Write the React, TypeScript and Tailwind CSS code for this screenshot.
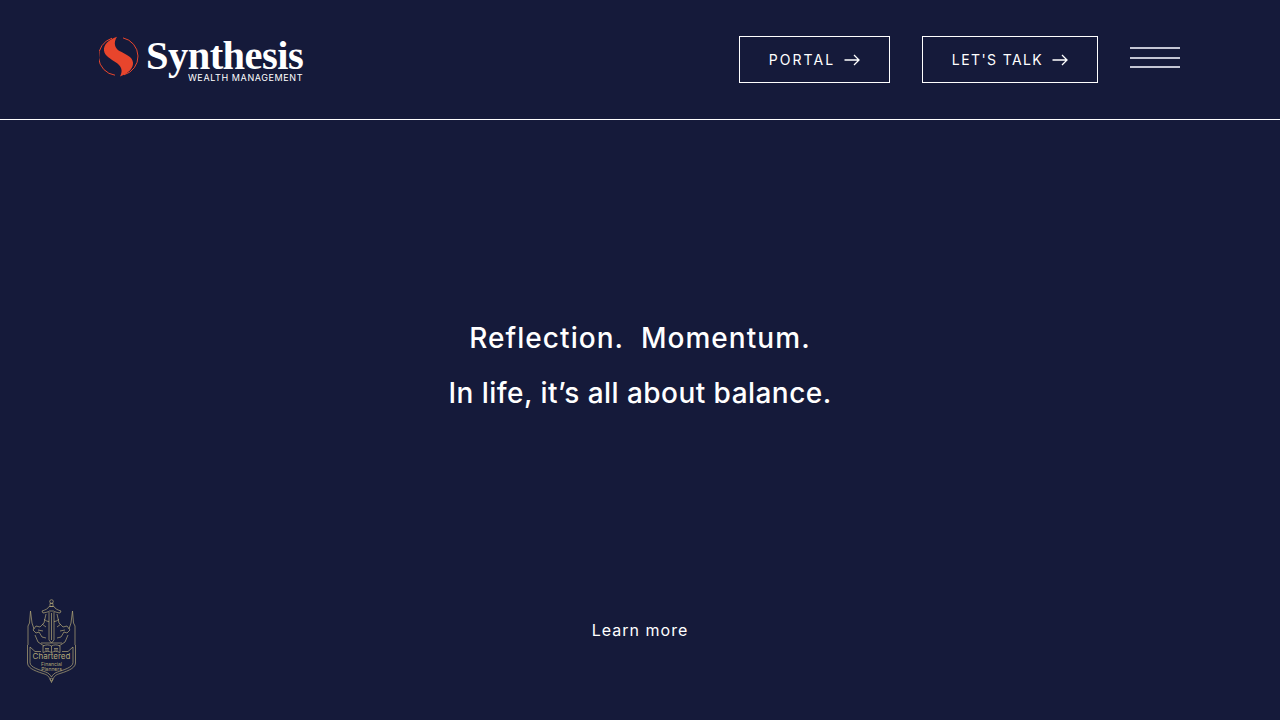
import React from "react";

function Arrow() {
  return (
    <svg width="16" height="12" viewBox="0 0 16 12" fill="none" stroke="#ffffff" strokeWidth="1.3" className="shrink-0">
      <path d="M0.5 6H15M10 1l5 5-5 5" />
    </svg>
  );
}

function LogoMark() {
  return (
    <svg width="40" height="41" viewBox="0 0 40 41" fill="none" className="shrink-0">
      <path d="M13 2.200A19 19 0 0 0 16 39.200" stroke="#e8452c" strokeWidth="1" />
      <path d="M25 38.800A19 19 0 0 0 24 1.900" stroke="#e8452c" strokeWidth="1" />
      <path
        d="M18 0.800C9 4 4.500 9 5 14.500C5.500 20 12 23 17 26.500C22 30 24.500 34 21 40.500C29 37.500 34.500 32.500 34 26.500C33.500 20.500 26 18 20.500 15C16 12.500 14 7 18 0.800Z"
        fill="#e8452c"
      />
    </svg>
  );
}

function Crest() {
  return (
    <div className="absolute left-[26px] top-[599px] w-[51px] h-[85px]">
      <svg width="51" height="85" viewBox="0 0 51 85" fill="none" stroke="#b3a878" strokeWidth="0.7" className="absolute inset-0">
        <circle cx="25.500" cy="2.500" r="1.800" />
        <path d="M24 4.500h3v3h-3zM16 12c3-1 6-2 7-4.500h5c1 2.500 4 3.500 7 4.500l-1 2c-3-.5-5-1-6.500-2h-4C22 13 20 13.500 17 14z" />
        <path d="M23 13v28l2.500 3 2.500-3V13M25.500 14v27" />
        <path d="M18 20c1.500 2 4 2.500 5 2.500M33 20c-1.500 2-4 2.500-5 2.500" />
        <path d="M2 46V27l1.500-3 1-12 1.500 12 2 6M49 46V27l-1.500-3-1-12-1.500 12-2 6" />
        <path d="M1.500 46v18c0 6 11 9 17 11 3.500 1.200 5 3 7 8.500 2-5.500 3.500-7.300 7-8.500 6-2 17-5 17-11V46" />
        <path d="M4 48v15.500c0 5 10 7.500 15.500 9.500 3 1 4.500 2.500 6 5 1.500-2.500 3-4 6-5 5.500-2 15.500-4.500 15.500-9.500V48" />
        <path d="M20 15l-2 9-4 4-4-1-3 4 3 3 3-1 3 5 4 1M31 15l2 9 4 4 4-1 3 4-3 3-3-1-3 5-4 1" />
        <path d="M9 36l3 7 6 4M42 36l-3 7-6 4" />
        <path d="M16 25l4 3M35 25l-4 3M12 31l5 1M39 31l-5 1" />
        <path d="M15 44h21M17 47c3-1.500 6-1.500 8.500 0 2.500-1.500 5.500-1.500 8.500 0v6.500c-3-1.500-6-1.500-8.500 0-2.500-1.500-5.500-1.500-8.500 0zM25.500 47v6.500M19 49.500h4M19 51h4M28 49.500h4M28 51h4" />
        <path d="M4 48l5 4.500h6M47 48l-5 4.500h-6" />
        <circle cx="25.500" cy="80.500" r="1.300" />
      </svg>
      <div className="absolute inset-x-0 top-[53px] flex flex-col items-center text-[#b3a878] font-['Inter',sans-serif] leading-none">
        <span className="text-[8px] leading-[9px]">Chartered</span>
        <span className="text-[5px] leading-[5px] mt-[1px]">Financial</span>
        <span className="text-[5px] leading-[5px]">Planners</span>
      </div>
    </div>
  );
}

export default function App() {
  return (
    <div className="relative w-full h-[720px] overflow-hidden bg-[#151a3a] text-white font-['Inter',sans-serif]">
      <header className="h-[120px] border-b border-white pl-[99px] pr-[100px] flex items-center justify-between">
        <div className="self-start mt-[36px] flex items-start gap-[7px]">
          <LogoMark />
          <div className="mt-[4px] flex flex-col items-end">
            <span className="font-['Liberation_Serif',serif] font-bold text-[40.500px] leading-[32px] tracking-[-0.55px]">Synthesis</span>
            <span className="font-['Inter',sans-serif] text-[9px] leading-[9px] tracking-[0.6px] mt-[1px]">WEALTH MANAGEMENT</span>
          </div>
        </div>
        <div className="flex items-center gap-[32px]">
          <a className="w-[151px] h-[47px] border border-white flex items-center justify-center gap-[9px] text-[14px] tracking-[2.1px]">
            PORTAL <Arrow />
          </a>
          <a className="w-[176px] h-[47px] border border-white flex items-center justify-center gap-[9px] text-[14px] tracking-[1.4px]">
            LET'S TALK <Arrow />
          </a>
          <div className="w-[50px] flex flex-col gap-[7.500px] -mt-[4px]">
            <div className="h-[2px] bg-[#c4c6d4]" />
            <div className="h-[2px] bg-[#c4c6d4]" />
            <div className="h-[2px] bg-[#c4c6d4]" />
          </div>
        </div>
      </header>
      <main className="flex flex-col items-center">
        <div className="mt-[191px] flex flex-col items-center text-[28px] leading-[55px] font-medium">
          <p className="whitespace-pre tracking-[1.05px]">Reflection.  Momentum.</p>
          <p className="tracking-[0.45px]">In life, it’s all about balance.</p>
        </div>
        <a className="mt-[197px] text-[16px] leading-[24px] tracking-[1px]">Learn more</a>
      </main>
      <Crest />
    </div>
  );
}
